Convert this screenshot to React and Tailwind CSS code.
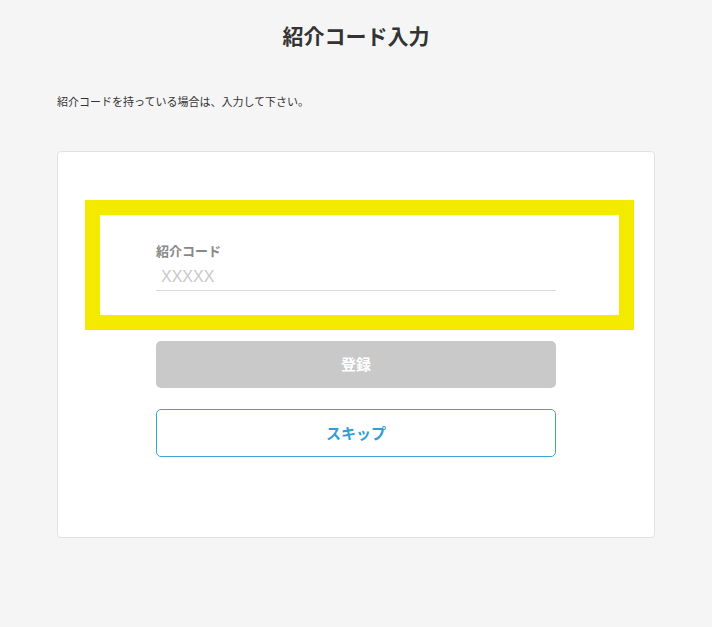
export default function App() {
  return (
    <div
      className="min-h-[627px] w-full bg-[#f5f5f5] text-[#333]"
      style={{ fontFamily: '"Noto Sans CJK JP", "Noto Sans", sans-serif' }}
    >
      <div className="mx-auto w-[598px] pt-[19px]">
        {/* Title */}
        <h1 className="m-0 text-center text-[21px] font-bold leading-[32px] text-[#333]">
          紹介コード入力
        </h1>

        <p className="mt-[42px] text-[11px] leading-[16px] text-[#333]">
          紹介コードを持っている場合は、入力して下さい。
        </p>

        {/* Card */}
        <div className="mt-[42px] h-[387px] rounded-[4px] border border-[#e1e1e1] bg-white pt-[48px]">
          {/* Highlighted input area */}
          <div className="ml-[27px] mr-[20px] border-[15px] border-[#f3ea00] bg-white">
            <div className="ml-[56px] w-[400px] pt-[27px] pb-[24px]">
              <label className="block text-[13px] font-bold leading-[18px] text-[#888]">
                紹介コード
              </label>
              <div
                className="mt-[5px] border-b border-[#d9d9d9] pb-[3px] pl-[5px] text-[16px] leading-[22px] text-[#c8c8c8]"
                style={{ fontFamily: '"Liberation Sans", sans-serif' }}
              >
                <span className="relative top-[1px]">XXXXX</span>
              </div>
            </div>
          </div>

          {/* Buttons */}
          <div className="mx-auto mt-[11px] flex w-[400px] flex-col gap-[21px]">
            <button className="h-[47px] w-full rounded-[5px] bg-[#c9c9c9] text-[15px] font-bold text-white">
              登録
            </button>
            <button className="h-[48px] w-full rounded-[5px] border border-[#3ba6d4] bg-white text-[15px] font-bold text-[#2f9fd4]">
              スキップ
            </button>
          </div>
        </div>
      </div>
    </div>
  );
}
